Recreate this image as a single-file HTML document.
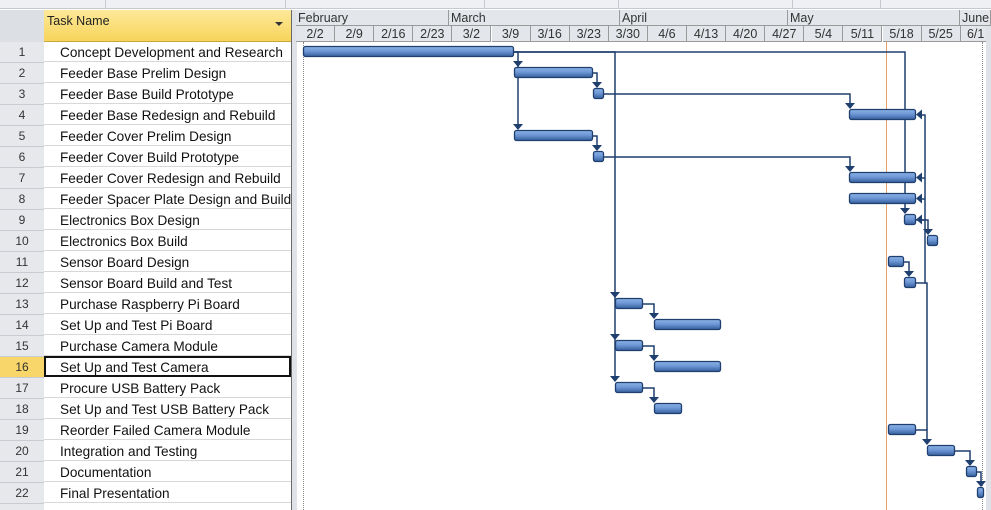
<!DOCTYPE html>
<html><head><style>
html,body{margin:0;width:991px;height:510px;overflow:hidden}
body{background:#fff;font-family:"Liberation Sans",sans-serif;position:relative}
.abs{position:absolute}
.rn{position:absolute;left:0;width:44px;height:20px;background:#e6e8ec;border-bottom:1px solid #c8ccd2;font-size:12px;color:#333;text-align:center;line-height:20px}
.tn{position:absolute;left:44px;width:247px;height:20px;border-bottom:1px solid #d8d8d8;font-size:13.6px;color:#111;line-height:21px;padding-left:16px;box-sizing:border-box;white-space:nowrap}
.mh{position:absolute;top:10px;height:16px;border-right:1px solid #9a9a9a;border-bottom:1px solid #9a9a9a;font-size:12.5px;color:#333;line-height:16px;padding-left:2px;box-sizing:border-box;background:#e3e6ea;overflow:hidden;white-space:nowrap}
.wh{position:absolute;top:26px;height:16px;border-right:1px solid #9a9a9a;border-bottom:1px solid #9a9a9a;font-size:12.5px;color:#333;line-height:16px;text-align:center;box-sizing:border-box;background:#e3e6ea}
</style></head><body>
<div class="abs" style="left:0;top:0;width:991px;height:8px;background:#eef0f3;border-bottom:1px solid #c6cad0"></div>
<div class="abs" style="left:105px;top:0;width:1px;height:8px;background:#c6cad0"></div>
<div class="abs" style="left:285px;top:0;width:1px;height:8px;background:#c6cad0"></div>
<div class="abs" style="left:484px;top:0;width:1px;height:8px;background:#c6cad0"></div>
<div class="abs" style="left:618px;top:0;width:1px;height:8px;background:#c6cad0"></div>
<div class="abs" style="left:792px;top:0;width:1px;height:8px;background:#c6cad0"></div>
<div class="abs" style="left:880px;top:0;width:1px;height:8px;background:#c6cad0"></div>
<div class="abs" style="left:0;top:10px;width:44px;height:32px;background:#dcdfe4;border-right:1px solid #b8bcc2"></div>
<div class="abs" style="left:44px;top:10px;width:247px;height:32px;background:linear-gradient(#fde99a,#f7d45a);border-bottom:1px solid #c9a93a;box-sizing:border-box;font-size:12.5px;color:#222;padding:4px 0 0 3px">Task Name<span style="position:absolute;right:8px;top:12px;width:0;height:0;border-left:4px solid transparent;border-right:4px solid transparent;border-top:4px solid #333"></span></div>
<div class="abs" style="left:291px;top:10px;width:5px;height:500px;background:#dfe2e6;border-left:1px solid #6a6a6a"></div>
<div class="mh" style="left:296px;width:153px">February</div>
<div class="mh" style="left:449px;width:171px">March</div>
<div class="mh" style="left:620px;width:168px">April</div>
<div class="mh" style="left:788px;width:172px">May</div>
<div class="mh" style="left:960px;width:31px">June</div>
<div id="w"></div>
<div class="abs" style="left:986px;top:26px;width:5px;height:484px;background:#dfe2e6"></div>
<div id="rows"></div>
<div class="abs" style="left:886px;top:42px;width:1px;height:468px;background:#e8a06a"></div>
<div class="abs" style="left:303px;top:42px;width:0;height:468px;border-left:1px dotted #888"></div>
<div class="abs" style="left:982px;top:42px;width:0;height:468px;border-left:1px dotted #888"></div>
<svg class="abs" style="left:0;top:0" width="991" height="510">
<defs><linearGradient id="g" x1="0" y1="0" x2="0" y2="1"><stop offset="0" stop-color="#8db3e6"/><stop offset="0.45" stop-color="#6e98d6"/><stop offset="1" stop-color="#365f9c"/></linearGradient></defs>
<g id="L" fill="none" stroke="#1f3f6f" stroke-width="1.5"></g>
<g id="A" fill="#1f3f6f"></g>
<g id="B"></g>
</svg>
<script>
var names=["Concept Development and Research","Feeder Base Prelim Design","Feeder Base Build Prototype","Feeder Base Redesign and Rebuild","Feeder Cover Prelim Design","Feeder Cover Build Prototype","Feeder Cover Redesign and Rebuild","Feeder Spacer Plate Design and Build","Electronics Box Design","Electronics Box Build","Sensor Board Design","Sensor Board Build and Test","Purchase Raspberry Pi Board","Set Up and Test Pi Board","Purchase Camera Module","Set Up and Test Camera","Procure USB Battery Pack","Set Up and Test USB Battery Pack","Reorder Failed Camera Module","Integration and Testing","Documentation","Final Presentation",""];
var h="";
for(var i=0;i<23;i++){var t=42+21*i;
var sel=i==15;
h+='<div class="rn" style="top:'+t+'px;'+(sel?'background:#f8d66a;':'')+'">'+(i<22?i+1:'')+'</div>';
h+='<div class="tn" style="top:'+t+'px;'+(sel?'border:2px solid #111;height:21px;top:'+(t-1)+'px;line-height:19px;padding-left:14px;':'')+'">'+names[i]+'</div>';}
document.getElementById('rows').innerHTML=h;
var wk=["2/2","2/9","2/16","2/23","3/2","3/9","3/16","3/23","3/30","4/6","4/13","4/20","4/27","5/4","5/11","5/18","5/25","6/1"];
var w="";for(var k=0;k<wk.length;k++){var x=296+39.1*k;w+='<div class="wh" style="left:'+x+'px;width:'+(k==17?31:39.1)+'px">'+wk[k]+'</div>';}
document.getElementById('w').innerHTML=w;
function T(r){return 42+21*(r-1);}
var bars=[[1,303,513],[2,514,592],[3,593,603],[4,849,915],[5,514,592],[6,593,603],[7,849,915],[8,849,915],[9,904,915],[10,927,937],[11,888,903],[12,904,915],[13,615,642],[14,654,720],[15,615,642],[16,654,720],[17,615,642],[18,654,681],[19,888,915],[20,927,954],[21,966,976],[22,977,983]];
var B="";bars.forEach(function(b){var y=T(b[0])+4;B+='<rect x="'+(b[1]+.5)+'" y="'+(y+.5)+'" width="'+(b[2]-b[1])+'" height="10" rx="2" fill="url(#g)" stroke="#1f3f6f" stroke-width="1.3"/>';});
document.getElementById('B').innerHTML=B;
var L="",A="";
function dn(x,r){var y=T(r)+4;A+='<polygon points="'+(x-5)+','+(y-6)+' '+(x+5)+','+(y-6)+' '+x+','+y+'"/>';}
function lf(x,r){var y=T(r)+9.5;A+='<polygon points="'+x+','+y+' '+(x+6)+','+(y-5)+' '+(x+6)+','+(y+5)+'"/>';}
function p(d){L+='<path d="'+d+'"/>';}
p("M513,52H518V66");dn(518,2);p("M518,66V129");dn(518,5);
p("M513,52H615V381");dn(615,13);dn(615,15);dn(615,17);
p("M513,52H905V213");dn(905,9);
p("M592,73H597V87");dn(597,3);
p("M603,94H850V108");dn(850,4);
p("M592,136H597V150");dn(597,6);
p("M603,157H850V171");dn(850,7);
p("M915,283H925V115H921");p("M925,178H921");p("M925,199H921");p("M925,220H921");
lf(916,4);lf(916,7);lf(916,8);lf(916,9);
p("M915,220H928V234");dn(928,10);
p("M903,262H909V276");dn(909,12);
p("M915,430H927V444");p("M925,283H927V430");dn(927,20);
p("M954,451H970V465");dn(970,21);
p("M976,472H981V486");dn(981,22);
p("M642,304H654V318");dn(654,14);
p("M642,346H654V360");dn(654,16);
p("M642,388H654V402");dn(654,18);
document.getElementById('L').innerHTML=L;document.getElementById('A').innerHTML=A;
</script>
</body></html>
